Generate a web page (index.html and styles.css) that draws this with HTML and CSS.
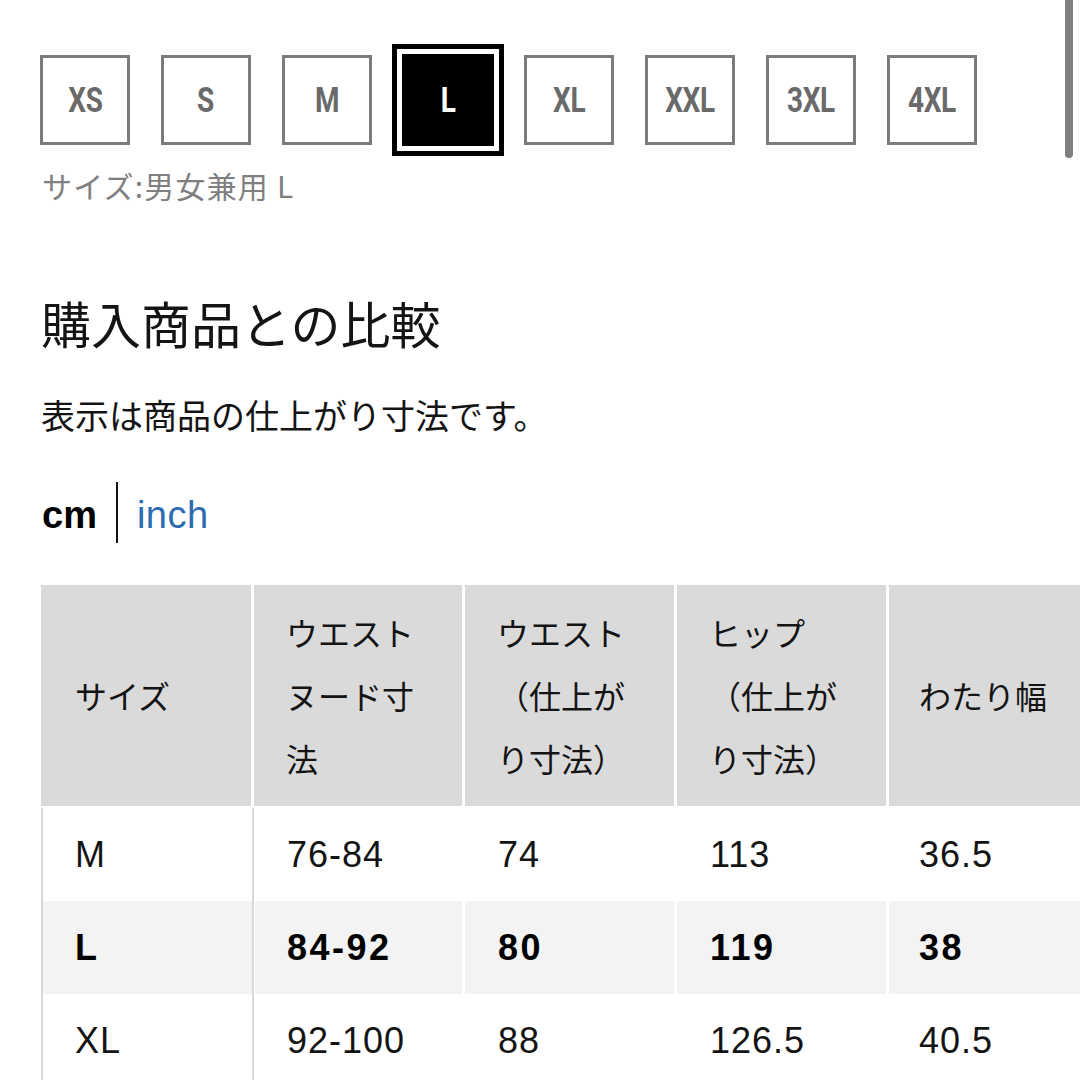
FILE: index.html
```html
<!DOCTYPE html>
<html lang="ja">
<head>
<meta charset="utf-8">
<title>サイズ</title>
<link rel="stylesheet" href="styles.css">
</head>
<body>
<div class="scrollbar"></div>
<main class="page">
  <div class="sizes">
    <div class="size"><span>XS</span></div>
    <div class="size"><span>S</span></div>
    <div class="size"><span>M</span></div>
    <div class="size selected"><span>L</span></div>
    <div class="size"><span>XL</span></div>
    <div class="size"><span>XXL</span></div>
    <div class="size"><span>3XL</span></div>
    <div class="size"><span>4XL</span></div>
  </div>
  <p class="size-label">サイズ:男女兼用 L</p>
  <h2 class="title">購入商品との比較</h2>
  <p class="note">表示は商品の仕上がり寸法です。</p>
  <div class="units">
    <span class="unit-cm">cm</span>
    <span class="unit-sep"></span>
    <span class="unit-inch">inch</span>
  </div>
  <div class="table-wrap">
    <table class="chart">
      <colgroup>
        <col class="c1"><col class="c2"><col class="c3"><col class="c4"><col class="c5">
      </colgroup>
      <thead>
        <tr>
          <th>サイズ</th>
          <th>ウエストヌード寸法</th>
          <th>ウエスト（仕上がり寸法）</th>
          <th>ヒップ（仕上がり寸法）</th>
          <th>わたり幅</th>
        </tr>
      </thead>
      <tbody>
        <tr>
          <td>M</td><td>76-84</td><td>74</td><td>113</td><td>36.5</td>
        </tr>
        <tr class="current">
          <td>L</td><td>84-92</td><td>80</td><td>119</td><td>38</td>
        </tr>
        <tr>
          <td>XL</td><td>92-100</td><td>88</td><td>126.5</td><td>40.5</td>
        </tr>
      </tbody>
    </table>
  </div>
</main>
</body>
</html>
```

FILE: styles.css
```css
html, body {
  margin: 0;
  padding: 0;
  overflow: hidden;
  background: #fff;
}

body {
  font-family: "Noto Sans CJK JP", "Liberation Sans", sans-serif;
  color: #111;
  width: 1080px;
  height: 1080px;
  position: relative;
}

.scrollbar {
  position: absolute;
  top: -6px;
  left: 1065px;
  width: 8px;
  height: 164px;
  border-radius: 4px;
  background: #7f7f7f;
}

.page {
  padding: 55px 0 0 40px;
}

/* size selector */
.sizes {
  display: flex;
  gap: 31px;
}

.size {
  width: 90px;
  height: 90px;
  box-sizing: border-box;
  border: 3px solid #7b7b7b;
  display: flex;
  align-items: center;
  justify-content: center;
  color: #6a6a6a;
  font-family: Roboto, "Liberation Sans", sans-serif;
  font-weight: 700;
  font-size: 35px;
}

.size span {
  display: inline-block;
  transform: scaleX(0.8);
  letter-spacing: -0.5px;
}

.size.selected {
  width: 92px;
  height: 92px;
  margin: -1px -1px;
  border-color: #000;
  background: #000;
  color: #fff;
  box-shadow: 0 0 0 5px #fff, 0 0 0 10px #000;
}

.size-label {
  margin: 20px 0 0 2px;
  font-size: 30px;
  letter-spacing: 1.2px;
  line-height: 40px;
  color: #7f7f7f;
}

.title {
  margin: 87px 0 0 1px;
  font-size: 50px;
  line-height: 60px;
  font-weight: 400;
  color: #141414;
}

.note {
  margin: 39px 0 0 1px;
  font-size: 34px;
  line-height: 48px;
  color: #141414;
}

.units {
  margin-top: 43px;
  height: 61px;
  display: flex;
  align-items: center;
  font-family: "Liberation Sans", Arial, sans-serif;
  font-size: 38px;
}

.unit-cm {
  margin-left: 2px;
  font-weight: 700;
  color: #000;
  padding-top: 6px;
}

.unit-sep {
  width: 2px;
  height: 61px;
  background: #111;
  margin: 0 19px 0 19px;
}

.unit-inch {
  color: #2d6cb2;
  padding-top: 6px;
  letter-spacing: 0.5px;
}

/* comparison table */
.table-wrap {
  margin-top: 42px;
  margin-left: 1px;
  width: 1039px;
  overflow: hidden;
}

.chart {
  border-collapse: separate;
  border-spacing: 0;
  table-layout: fixed;
  width: 1100px;
}

.chart .c1 { width: 213px; }
.chart .c2 { width: 211px; }
.chart .c3 { width: 212px; }
.chart .c4 { width: 212px; }
.chart .c5 { width: 252px; }

.chart th {
  background: #dadada;
  border-right: 3px solid #fff;
  border-bottom: 2px solid #fff;
  padding: 16px 20px 16px 32px;
  font-weight: 400;
  font-size: 32px;
  line-height: 63px;
  text-align: left;
  vertical-align: middle;
  color: #141414;
}

.chart th:first-child {
  padding-left: 34px;
}

.chart th:nth-child(5) {
  padding-left: 30px;
}

.chart td {
  border-right: 3px solid #fff;
  padding: 15px 20px 15px 33px;
  font-family: "Liberation Sans", Arial, sans-serif;
  font-size: 36px;
  letter-spacing: 1px;
  line-height: 63px;
  color: #141414;
  vertical-align: middle;
  white-space: nowrap;
}

.chart td:first-child {
  border-left: 2px solid #d8d8d8;
  border-right: 2px solid #d8d8d8;
  padding-left: 32px;
}

.chart td:nth-child(2) {
  border-left: 1px solid #fff;
  padding-left: 32px;
}

.chart td:nth-child(5) {
  padding-left: 30px;
}

.chart tr.current td {
  background: #f3f3f3;
  font-weight: 700;
  letter-spacing: 2.5px;
  color: #000;
}
```
